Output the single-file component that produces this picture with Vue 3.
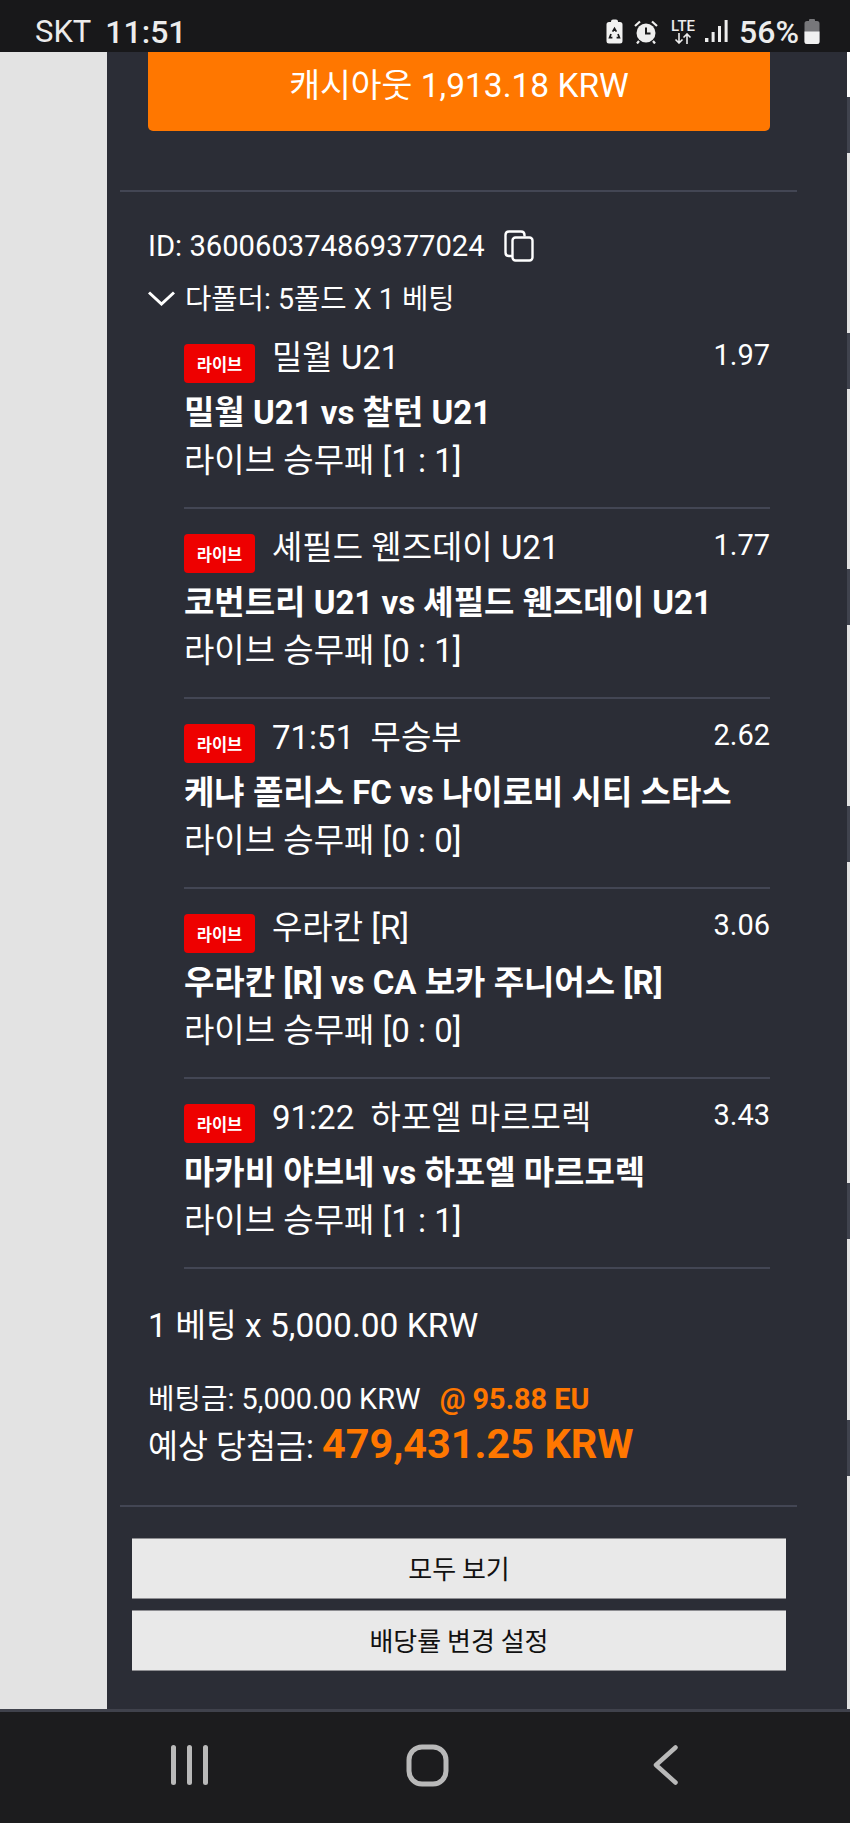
<template>
  <div class="screen">
    <!-- status bar -->
    <header class="status">
      <span class="carrier">SKT</span>
      <span class="clock">11:51</span>
      <span class="status-right">
        <svg class="ic-save" width="17" height="25" viewBox="0 0 17 25">
          <path d="M5 2.5Q5 .5 7 .5H10Q12 .5 12 2.5V3H14Q16.5 3 16.5 5.5V22Q16.5 24.5 14 24.5H3Q.5 24.5 .5 22V5.5Q.5 3 3 3H5Z" fill="#f1f1f1" />
          <path d="M6.6 12.6 8.5 9.5 10.4 12.6M12 15 13.4 18.6H10.6M6.4 18.6H3.6L5 15" stroke="#1a1a1c" stroke-width="1.7" fill="none" />
        </svg>
        <svg class="ic-alarm" width="24" height="24" viewBox="0 0 24 24">
          <circle cx="12" cy="13" r="9.5" fill="#eee" />
          <path d="M12 7.5V13.5H16.5" stroke="#1a1a1c" stroke-width="2" fill="none" />
          <path d="M1 6 6 1.5M23 6 18 1.5M5 21 3 23.5M19 21 21 23.5" stroke="#eee" stroke-width="2.2" fill="none" />
        </svg>
        <span class="lte">
          <span class="lte-text">LTE</span>
          <svg width="20" height="11" viewBox="0 0 20 11">
            <path d="M6 0V10M2.5 6.5 6 10 9.5 6.5M14 11V1M10.5 4.5 14 1 17.5 4.5" stroke="#eee" stroke-width="1.6" fill="none" />
          </svg>
        </span>
        <svg class="bars" width="23" height="23" viewBox="0 0 23 23">
          <rect x="0" y="18" width="3.4" height="4" fill="#eee" />
          <rect x="6.6" y="12" width="3" height="10" fill="#eee" />
          <rect x="13" y="6" width="3" height="16" fill="#eee" />
          <rect x="19.6" y="0" width="3" height="22" fill="#eee" />
        </svg>
        <span class="battery-text">56%</span>
        <svg width="16" height="25" viewBox="0 0 16 25">
          <path d="M5 1Q5 0 6 0H10Q11 0 11 1V2H13Q15.5 2 15.5 4.5V22.5Q15.5 25 13 25H3Q.5 25 .5 22.5V4.5Q.5 2 3 2H5Z" fill="#77777a" />
          <path d="M.5 12.5H15.5V22.5Q15.5 25 13 25H3Q.5 25 .5 22.5Z" fill="#f1f1f1" />
        </svg>
      </span>
    </header>

    <main class="body">
      <aside class="gutter"></aside>
      <section class="panel">
        <div class="cashout-wrap">
          <button class="cashout">캐시아웃 1,913.18 KRW</button>
        </div>
        <hr class="rule" />

        <div class="id-row">
          <span>ID: 360060374869377024</span>
          <svg class="copy" width="30" height="32" viewBox="0 0 30 32">
            <path d="M8 26H5Q1.5 26 1.5 22.5V5Q1.5 1.5 5 1.5H17Q20.5 1.5 20.5 5V6.5" fill="none" stroke="#fff" stroke-width="2.4" />
            <rect x="8.5" y="7.5" width="20" height="23" rx="3" fill="#2b2d36" stroke="#fff" stroke-width="2.4" />
          </svg>
        </div>
        <div class="multi">
          <svg class="chevron" width="27" height="15" viewBox="0 0 27 15">
            <path d="M1 1.5 13.5 13 26 1.5" fill="none" stroke="#fff" stroke-width="3" />
          </svg>
          <span>다폴더: 5폴드 X 1 베팅</span>
        </div>

        <ul class="legs">
          <li v-for="leg in legs" :key="leg.match" class="leg">
            <div class="leg-top">
              <span class="badge">라이브</span>
              <span class="league">{{ leg.league }}</span>
              <span class="odds">{{ leg.odds }}</span>
            </div>
            <div class="match">{{ leg.match }}</div>
            <div class="market">라이브 승무패 [{{ leg.score }}]</div>
          </li>
        </ul>

        <div class="stake-line">1 베팅 x 5,000.00 KRW</div>
        <div class="stake">베팅금: 5,000.00 KRW <b>@ 95.88 EU</b></div>
        <div class="win">예상 당첨금: <b>479,431.25 KRW</b></div>
        <hr class="rule rule-low" />

        <div class="actions">
          <button class="action">모두 보기</button>
          <button class="action">배당률 변경 설정</button>
        </div>
      </section>
      <aside class="scroll-strip">
        <i v-for="(gap, n) in stripGaps" :key="n" :style="{ marginTop: gap + 'px' }"></i>
      </aside>
    </main>

    <!-- system nav -->
    <footer class="nav">
      <svg width="37" height="40" viewBox="0 0 37 40">
        <path d="M2.5 2.5V37.5M18.5 2.5V37.5M34.5 2.5V37.5" stroke="#b9b9b9" stroke-width="5" stroke-linecap="round" />
      </svg>
      <svg width="43" height="43" viewBox="0 0 43 43">
        <rect x="3" y="3" width="37" height="37" rx="13" fill="none" stroke="#b9b9b9" stroke-width="5" />
      </svg>
      <svg width="25" height="40" viewBox="0 0 25 40">
        <path d="M22.5 2.5 3 20 22.5 37.5" fill="none" stroke="#b9b9b9" stroke-width="4.5" stroke-linecap="round" stroke-linejoin="round" />
      </svg>
    </footer>
  </div>
</template>

<script setup>
const legs = [
  { league: "밀월 U21", odds: "1.97", match: "밀월 U21 vs 찰턴 U21", score: "1 : 1" },
  { league: "셰필드 웬즈데이 U21", odds: "1.77", match: "코번트리 U21 vs 셰필드 웬즈데이 U21", score: "0 : 1" },
  { league: "71:51  무승부", odds: "2.62", match: "케냐 폴리스 FC vs 나이로비 시티 스타스", score: "0 : 0" },
  { league: "우라칸 [R]", odds: "3.06", match: "우라칸 [R] vs CA 보카 주니어스 [R]", score: "0 : 0" },
  { league: "91:22  하포엘 마르모렉", odds: "3.43", match: "마카비 야브네 vs 하포엘 마르모렉", score: "1 : 1" },
];

// space above each dark block of the strip on the right edge
const stripGaps = [0, 180, 180, 181, 321, 181];
</script>

<style>
body {
  margin: 0;
  background: #1a1a1c;
}
</style>

<style scoped>
.screen {
  width: 850px;
  height: 1823px;
  display: flex;
  flex-direction: column;
  overflow: hidden;
  font-family: Roboto, "Noto Sans CJK KR", sans-serif;
  color: #fff;
}

.status {
  height: 52px;
  flex: none;
  display: flex;
  align-items: center;
  padding: 11px 30px 0 35px;
  box-sizing: border-box;
  background: #18181a;
  color: #ececec;
}
.carrier {
  font-size: 31px;
}
.clock {
  font-size: 32px;
  font-weight: 500;
  margin-left: 14px;
}
.status-right {
  margin-left: auto;
  display: flex;
  align-items: center;
}
.ic-alarm {
  margin-left: 11px;
}
.lte {
  margin-left: 12px;
  width: 26px;
  display: flex;
  flex-direction: column;
  align-items: center;
}
.lte-text {
  font-size: 15px;
  line-height: 14px;
  font-weight: 500;
}
.bars {
  margin-left: 9px;
}
.battery-text {
  margin: 0 5px 0 11px;
  font-size: 32px;
  font-weight: 500;
}

.body {
  flex: 1;
  display: flex;
  min-height: 0;
}
.gutter {
  width: 107px;
  flex: none;
  background: #e3e3e3;
}
.panel {
  flex: 1;
  min-width: 0;
  background: #2b2d36;
  display: flex;
  flex-direction: column;
}
.scroll-strip {
  width: 3px;
  flex: none;
  background: #e3e3e3;
  display: flex;
  flex-direction: column;
}
.scroll-strip::before {
  content: "";
  height: 45px;
  flex: none;
  background: #fff;
}
.scroll-strip i {
  display: block;
  height: 56px;
  flex: none;
  background: #40434e;
}

.cashout-wrap {
  padding: 0 77px 0 41px;
}
.cashout {
  display: block;
  width: 100%;
  height: 79px;
  padding: 0 0 18px;
  border: 0;
  border-radius: 0 0 5px 5px;
  background: #ff7700;
  color: #fff;
  font: 400 33.5px Roboto, "Noto Sans CJK KR", sans-serif;
}
.rule {
  margin: 59px 50px 0 13px;
  border: 0;
  height: 2px;
  background: #434654;
}
.rule-low {
  margin-top: 33px;
}

.id-row {
  margin: 38px 0 0 41px;
  height: 32px;
  display: flex;
  align-items: center;
  gap: 19px;
  font-size: 29.2px;
}
.multi {
  margin: 16px 0 0 41px;
  height: 36px;
  display: flex;
  align-items: center;
  gap: 10px;
  font-size: 28.6px;
}
.chevron {
  margin-top: 5px;
}

.legs {
  list-style: none;
  margin: 5px 77px 0;
  padding: 0;
}
.leg {
  height: 188px;
  border-bottom: 2px solid #434654;
}
.leg-top {
  display: flex;
  align-items: flex-start;
  height: 61px;
}
.badge {
  width: 71px;
  height: 39px;
  margin-top: 25px;
  border-radius: 4px;
  background: #ee0000;
  font-size: 16.5px;
  font-weight: 700;
  display: flex;
  align-items: center;
  justify-content: center;
}
.league {
  margin: 17px 0 0 17px;
  font-size: 33px;
  line-height: 44px;
  white-space: pre;
}
.odds {
  margin: 18px 0 0 auto;
  font-size: 29px;
  line-height: 36px;
}
.match {
  margin-top: 12px;
  font-size: 33px;
  font-weight: 700;
  line-height: 42px;
  white-space: nowrap;
}
.market {
  margin-top: 6px;
  font-size: 33px;
  line-height: 42px;
}

.stake-line {
  margin: 37px 0 0 41px;
  font-size: 33.5px;
  line-height: 40px;
}
.stake {
  margin: 35px 0 0 41px;
  font-size: 28.8px;
  line-height: 36px;
}
.stake b {
  margin-left: 12px;
  color: #ff7700;
  font-weight: 700;
}
.win {
  margin: 2px 0 0 41px;
  font-size: 32.6px;
  line-height: 50px;
}
.win b {
  font-size: 41.4px;
  font-weight: 700;
  color: #ff7700;
}

.actions {
  margin: 31px 61px 0 25px;
  display: flex;
  flex-direction: column;
  gap: 11px;
}
.action {
  height: 61px;
  padding: 0 0 3px;
  border: 0;
  border-top: 1px solid #8e8e92;
  border-bottom: 1px solid #8e8e92;
  background: #e9e9e9;
  color: #111;
  font: 400 26px "Noto Sans CJK KR", sans-serif;
}

.nav {
  height: 114px;
  flex: none;
  border-top: 3px solid #40424c;
  box-sizing: border-box;
  background: #1c1c1e;
  display: flex;
  align-items: center;
  padding: 0 0 5px 171px;
}
.nav svg:nth-child(2) {
  margin-left: 198px;
}
.nav svg:nth-child(3) {
  margin-left: 204px;
}
</style>
